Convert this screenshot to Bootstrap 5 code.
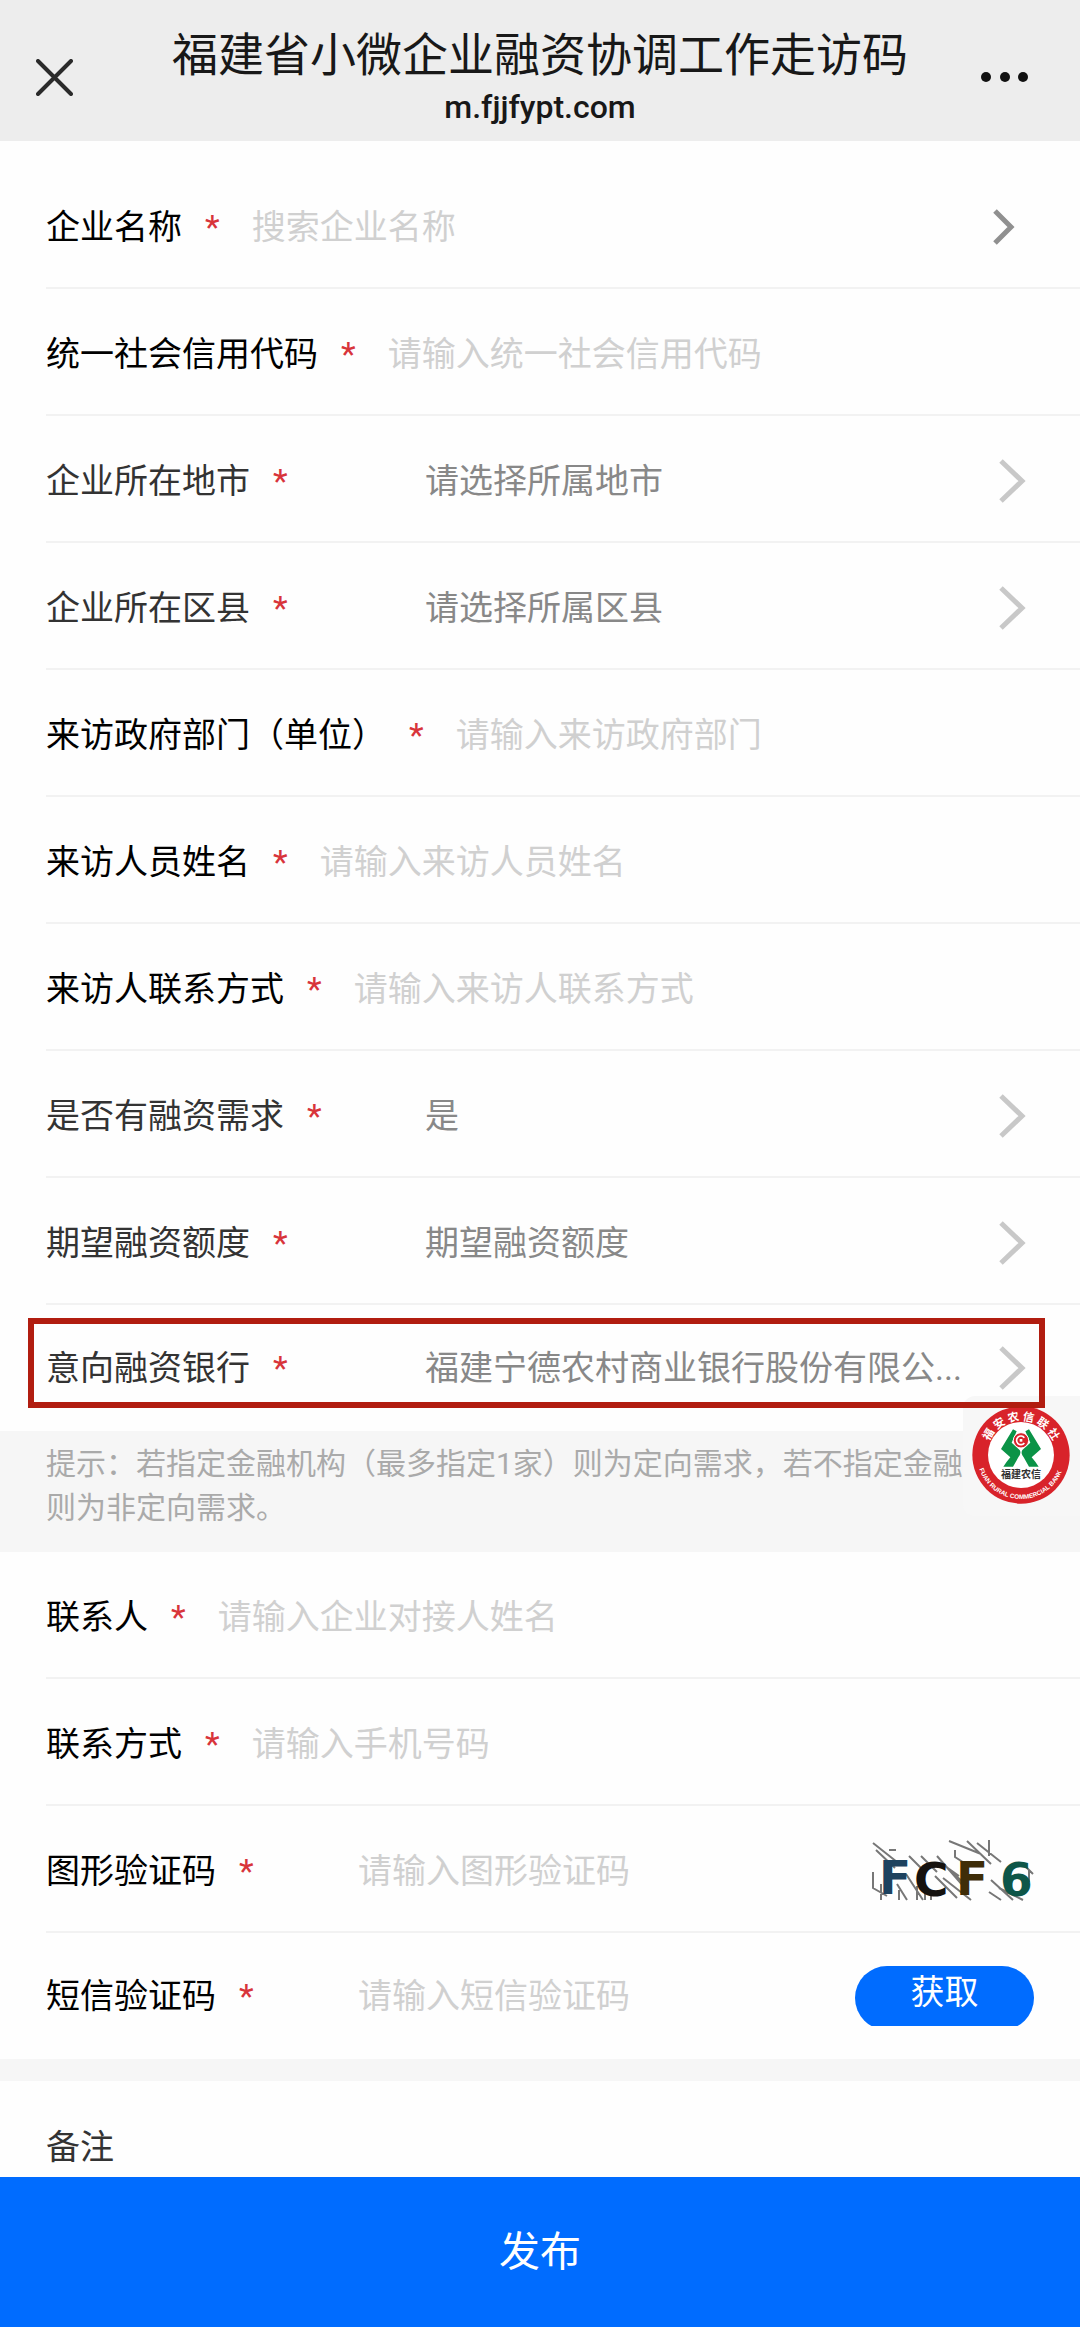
<!DOCTYPE html>
<html lang="zh-CN">
<head>
<meta charset="utf-8">
<meta name="viewport" content="width=device-width, initial-scale=1">
<title>福建省小微企业融资协调工作走访码</title>
<link href="https://cdn.jsdelivr.net/npm/bootstrap@5.3.0/dist/css/bootstrap.min.css" rel="stylesheet">
<style>
  body {
    font-family: Roboto, "Noto Sans CJK SC", sans-serif;
    font-size: 34px;
    line-height: 50px;
    color: #333;
    background: #fefefe;
  }
  .topbar { background: #ededed; padding: 22px 0 15px; color: #181818; }
  .topbar h1 { font-size: 46px; line-height: 66px; font-weight: 400; }
  .topbar p { font-size: 32px; line-height: 38px; font-weight: 500; }
  .bar-side { width: 108px; }
  .bar-left { padding-left: 36px; }
  .bar-right { padding-right: 51px; }
  .plain-btn { background: none; border: 0; color: inherit; line-height: 0; }

  .field { height: 127px; margin-left: 46px; padding-top: 4px; padding-right: 53px; border-bottom: 2px solid #f2f2f2; }
  .field.first { height: 148px; padding-top: 26px; padding-right: 65px; }
  .field.last { height: 126px; padding-top: 0; border-bottom: 0; }
  .field.first .plain-btn { color: #909090; }
  .field.typed label { color: #000; margin-right: 32px; }
  .field.picked label { width: 379px; }
  .field.coded label { width: 312px; margin-right: 0; }
  .field.coded { padding-right: 46px; }
  .req::after { content: "*"; color: #d8343a; margin-left: 23px; }
  .field input, .field select, .field textarea {
    border: 0; outline: 0; padding: 0; background: transparent;
    font: inherit; line-height: 50px; min-width: 0; resize: none;
  }
  .field input::placeholder { color: #d0d0d0; opacity: 1; }
  .field select { appearance: none; color: #888; text-overflow: ellipsis; overflow: hidden; white-space: nowrap; }
  .chev { width: 28px; height: 44px; margin-left: 22px; color: #c8c8c8; pointer-events: none; }

  .marked::before {
    content: ""; position: absolute; z-index: 3; pointer-events: none;
    top: 13px; bottom: 23px; left: -18px; right: 35px; border: 6px solid #b11d10;
  }
  .hint { background: #f6f6f6; color: #aaa; font-size: 30px; line-height: 44px; padding: 11px 46px 22px; }
  .hint p { min-height: 88px; }
  .floater {
    position: absolute; z-index: 2; right: 0; top: -35px; width: 117px; height: 120px;
    padding: 10px 0 0 9px; background: #f7f7f7; border-radius: 12px 0 0 12px; line-height: 0;
  }
  .sms { height: 60px; width: 179px; }
  .sms button { height: 64px; padding: 0 0 12px; border: 0; border-radius: 32px; background: #006cff; color: #fff; }
  .band { height: 22px; background: #f6f6f6; }
  .field.note { height: 96px; padding-top: 41px; border-bottom: 0; overflow: hidden; }
  .submit { height: 150px; border: 0; background: #006cff; color: #fff; font-size: 41px; }
</style>
</head>
<body>
<div class="d-flex flex-column min-vh-100">

<header class="topbar d-flex align-items-center">
  <div class="bar-side bar-left">
    <button type="button" class="plain-btn p-0" aria-label="关闭">
      <svg width="37" height="37" viewBox="0 0 37 37" fill="none" stroke="#2a2a2a" stroke-width="4" stroke-linecap="round"><path d="M2 2 35 35M35 2 2 35"/></svg>
    </button>
  </div>
  <div class="flex-grow-1 text-center text-nowrap">
    <h1 class="m-0">福建省小微企业融资协调工作走访码</h1>
    <p class="m-0">m.fjjfypt.com</p>
  </div>
  <div class="bar-side bar-right text-end">
    <button type="button" class="plain-btn p-0" aria-label="更多">
      <svg width="49" height="12" viewBox="0 0 49 12" fill="#111"><circle cx="6" cy="6" r="5"/><circle cx="25" cy="6" r="5"/><circle cx="43" cy="6" r="5"/></svg>
    </button>
  </div>
</header>

<form class="flex-grow-1 d-flex flex-column" onsubmit="return false">
  <div class="field first typed d-flex align-items-center">
    <label class="req" for="company">企业名称</label>
    <input class="flex-grow-1" id="company" type="text" placeholder="搜索企业名称">
    <button type="button" class="plain-btn p-0" aria-label="搜索">
      <svg width="22" height="36" viewBox="0 0 22 36" fill="none" stroke="currentColor" stroke-width="5"><path d="M2 2 18 18 2 34"/></svg>
    </button>
  </div>
  <div class="field typed d-flex align-items-center">
    <label class="req" for="credit">统一社会信用代码</label>
    <input class="flex-grow-1" id="credit" type="text" placeholder="请输入统一社会信用代码">
  </div>
  <div class="field picked d-flex align-items-center">
    <label class="req" for="city">企业所在地市</label>
    <select class="flex-grow-1" id="city"><option>请选择所属地市</option></select>
    <svg class="chev flex-shrink-0" viewBox="0 0 28 44" fill="none" stroke="currentColor" stroke-width="5"><path d="M2 2 23 22 2 42"/></svg>
  </div>
  <div class="field picked d-flex align-items-center">
    <label class="req" for="county">企业所在区县</label>
    <select class="flex-grow-1" id="county"><option>请选择所属区县</option></select>
    <svg class="chev flex-shrink-0" viewBox="0 0 28 44" fill="none" stroke="currentColor" stroke-width="5"><path d="M2 2 23 22 2 42"/></svg>
  </div>
  <div class="field typed d-flex align-items-center">
    <label class="req" for="dept">来访政府部门（单位）</label>
    <input class="flex-grow-1" id="dept" type="text" placeholder="请输入来访政府部门">
  </div>
  <div class="field typed d-flex align-items-center">
    <label class="req" for="visitor">来访人员姓名</label>
    <input class="flex-grow-1" id="visitor" type="text" placeholder="请输入来访人员姓名">
  </div>
  <div class="field typed d-flex align-items-center">
    <label class="req" for="visitortel">来访人联系方式</label>
    <input class="flex-grow-1" id="visitortel" type="tel" placeholder="请输入来访人联系方式">
  </div>
  <div class="field picked d-flex align-items-center">
    <label class="req" for="need">是否有融资需求</label>
    <select class="flex-grow-1" id="need"><option>是</option></select>
    <svg class="chev flex-shrink-0" viewBox="0 0 28 44" fill="none" stroke="currentColor" stroke-width="5"><path d="M2 2 23 22 2 42"/></svg>
  </div>
  <div class="field picked d-flex align-items-center">
    <label class="req" for="amount">期望融资额度</label>
    <select class="flex-grow-1" id="amount"><option>期望融资额度</option></select>
    <svg class="chev flex-shrink-0" viewBox="0 0 28 44" fill="none" stroke="currentColor" stroke-width="5"><path d="M2 2 23 22 2 42"/></svg>
  </div>
  <div class="field last picked marked position-relative d-flex align-items-center">
    <label class="req flex-shrink-0" for="bank">意向融资银行</label>
    <select class="flex-grow-1" id="bank"><option>福建宁德农村商业银行股份有限公...</option></select>
    <svg class="chev flex-shrink-0" viewBox="0 0 28 44" fill="none" stroke="currentColor" stroke-width="5"><path d="M2 2 23 22 2 42"/></svg>
  </div>

  <div class="hint position-relative">
    <p class="m-0">提示：若指定金融机构（最多指定1家）则为定向需求，若不指定金融<br>则为非定向需求。</p>
    <a class="floater" href="#" aria-label="福建农信">
      <svg width="98" height="98" viewBox="35 18 294 294">
        <defs>
          <path id="arcTop" d="M78 165a104 104 0 0 1 208 0"/>
          <path id="arcBottom" d="M50 165a132 132 0 0 0 264 0"/>
        </defs>
        <circle cx="182" cy="165" r="146" fill="#d8232a"/>
        <circle cx="182" cy="165" r="99" fill="#fff"/>
        <text font-family="Noto Sans CJK SC, sans-serif" font-size="34" font-weight="700" fill="#fff" text-anchor="middle"><textPath href="#arcTop" startOffset="50%">福 安 农 信 联 社</textPath></text>
        <text font-family="Liberation Sans, sans-serif" font-size="19" font-weight="700" fill="#fff" text-anchor="middle"><textPath href="#arcBottom" startOffset="49%">FUAN RURAL COMMERCIAL BANK</textPath></text>
        <g fill="#0b9347">
          <path d="M158 88 169 94 154 128 178 150Q184 160 174 172L158 200H129Q138 186 150 172L122 147Z"/>
          <path d="M206 88 195 94 210 128 186 150Q180 160 190 172L206 200H235Q226 186 214 172L242 147Z"/>
        </g>
        <circle cx="182" cy="121" r="23" fill="#d8232a" stroke="#fff" stroke-width="3"/>
        <path d="M192 113A13 13 0 1 0 192 129" fill="none" stroke="#fff" stroke-width="5"/>
        <path d="M178 117h8v8h-8z" fill="#fff"/>
        <text x="182" y="233" font-family="Noto Sans CJK SC, sans-serif" font-size="30" font-weight="700" fill="#333" text-anchor="middle">福建农信</text>
      </svg>
    </a>
  </div>

  <div class="field typed d-flex align-items-center">
    <label class="req" for="contact">联系人</label>
    <input class="flex-grow-1" id="contact" type="text" placeholder="请输入企业对接人姓名">
  </div>
  <div class="field typed d-flex align-items-center">
    <label class="req" for="mobile">联系方式</label>
    <input class="flex-grow-1" id="mobile" type="tel" placeholder="请输入手机号码">
  </div>
  <div class="field typed coded d-flex align-items-center">
    <label class="req" for="captcha">图形验证码</label>
    <input class="flex-grow-1" id="captcha" type="text" placeholder="请输入图形验证码">
    <svg class="overflow-visible" width="161" height="61" viewBox="0 0 161 61" role="img" aria-label="验证码">
      <g fill="none" stroke="#777" stroke-width="2">
        <path d="M0 3 24 22M3 10 22 28M16 10h7M0 32v16L14 56M8 44v16M24 44 34 60M26 50v10M36 16 48 28M48 16 64 32M64 16 92 48M33 34 50 60M44 46v14M52 50v10M58 52v8M62 36 84 58M70 38 98 60M76 30 90 42M82 10v7L96 26M76 1 108 14M94 1 118 24M104 3 128 22M116 0v16M118 40 140 60M116 52 128 60M150 24 160 34M126 48 150 60M72 26 86 36M156 30v12"/>
      </g>
      <g font-family="DejaVu Sans, sans-serif" font-size="47" font-weight="700">
        <text x="6" y="54" fill="#1d425f">F</text>
        <text x="41" y="56" fill="#15120f">C</text>
        <text x="83" y="55" fill="#3f2d08">F</text>
        <text x="127" y="56" fill="#0e5648">6</text>
      </g>
    </svg>
  </div>
  <div class="field last typed coded d-flex align-items-center">
    <label class="req" for="sms">短信验证码</label>
    <input class="flex-grow-1" id="sms" type="text" placeholder="请输入短信验证码">
    <div class="sms overflow-hidden"><button type="button" class="w-100">获取</button></div>
  </div>

  <div class="band"></div>

  <div class="field note d-flex align-items-start">
    <label for="remark">备注</label>
    <textarea class="flex-grow-1 ms-4" id="remark" rows="1"></textarea>
  </div>

  <button type="submit" class="submit w-100 mt-auto sticky-bottom">发布</button>
</form>
</div>
<script src="https://cdn.jsdelivr.net/npm/bootstrap@5.3.0/dist/js/bootstrap.bundle.min.js"></script>
</body>
</html>
